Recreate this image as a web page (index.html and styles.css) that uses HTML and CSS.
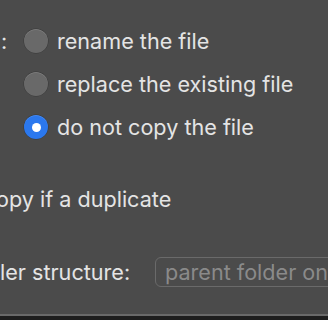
FILE: index.html
```html
<!DOCTYPE html>
<html lang="en">
<head>
  <meta charset="UTF-8" />
  <title>Copy options</title>
  <link rel="stylesheet" href="styles.css">
</head>
<body>
  <div class="panel">

    <!-- Duplicate handling -->
    <div class="choice-group">
      <span class="group-label">:</span>
      <div class="choices">
        <label class="choice"><span class="radio"></span>rename the file</label>
        <label class="choice"><span class="radio"></span>replace the existing file</label>
        <label class="choice"><span class="radio checked"></span>do not copy the file</label>
      </div>
    </div>

    <div class="check-row">opy if a duplicate</div>

    <!-- Folder structure -->
    <div class="field-row">
      <span class="field-label">ler structure:</span>
      <div class="field">parent folder only</div>
    </div>

  </div>
  <div class="footer-edge"></div>
</body>
</html>
```
FILE: styles.css
```css
* {
  margin: 0;
  padding: 0;
  box-sizing: border-box;
}
html, body {
  width: 328px;
  height: 320px;
  overflow: hidden;
  background: #4b4b4b;
  color: #e4e4e4;
  font-family: "Inter", "Liberation Sans", sans-serif;
  font-size: 21.6px;
}
body {
  display: flex;
  flex-direction: column;
}

.panel {
  flex: 1;
  padding-top: 29px;
}

/* Radio group */
.choice-group {
  display: flex;
  align-items: flex-start;
}
.group-label {
  width: 24px;
  padding-left: 1px;
  line-height: 24px;
}
.choices {
  display: flex;
  flex-direction: column;
  gap: 19px;
}
.choice {
  display: flex;
  align-items: center;
  gap: 9px;
  height: 24px;
  white-space: nowrap;
}
.radio {
  width: 24px;
  height: 24px;
  border-radius: 50%;
  background: #696969;
  box-shadow: inset 0 1px 0 rgba(255, 255, 255, 0.12), 0 0 0 0.5px rgba(0, 0, 0, 0.25);
  flex-shrink: 0;
}
.radio.checked {
  background: #2b78ee;
  display: flex;
  align-items: center;
  justify-content: center;
}
.radio.checked::after {
  content: "";
  width: 9px;
  height: 9px;
  border-radius: 50%;
  background: #ffffff;
}

/* Checkbox label (clipped) */
.check-row {
  margin-top: 48px;
  margin-left: -4px;
  line-height: 24px;
  white-space: nowrap;
}

/* Folder structure field */
.field-row {
  display: flex;
  align-items: center;
  margin-top: 46px;
  white-space: nowrap;
}
.field-label {
  width: 155px;
  flex-shrink: 0;
}
.field {
  width: 260px;
  flex-shrink: 0;
  height: 30px;
  line-height: 28px;
  padding-left: 9px;
  border: 1px solid #6a6a6a;
  border-radius: 6px;
  color: #8a8a8a;
  overflow: hidden;
}

.footer-edge {
  height: 6px;
  border-top: 2px solid #6a6a6a;
  background: #1e1e1e;
}
```
